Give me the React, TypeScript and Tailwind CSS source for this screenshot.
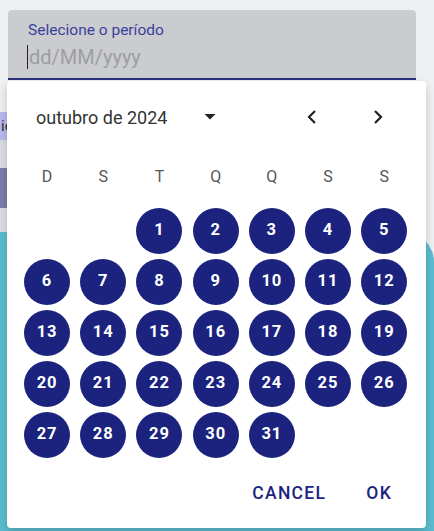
import React from "react";

const days: (number | null)[] = [null, null, ...Array.from({ length: 31 }, (_, i) => i + 1)];
const weekdays = ["D", "S", "T", "Q", "Q", "S", "S"];

export default function App() {
  return (
    <div className="relative w-[434px] h-[531px] overflow-hidden bg-[#eff0f2]" style={{ fontFamily: "Roboto, 'Liberation Sans', sans-serif" }}>
      {/* background page content */}
      <div className="absolute left-0 top-[112px] w-[20px] h-[28px] bg-[#b9b9ef] text-[15px] leading-[28px] text-[#333] pl-[1px]">ie</div>
      <div className="absolute left-0 top-[140px] w-[20px] h-[28px] bg-[#dcdde2]" />
      <div className="absolute left-0 top-[168px] w-[20px] h-[40px] bg-[#7c7ca8]" />
      <div className="absolute left-0 top-[208px] w-[20px] h-[26px] bg-[#dcdde2]" />
      <div className="absolute left-0 top-[232px] w-[434px] h-[300px] bg-[#5bbccf] rounded-tr-[30px]" />

      {/* input */}
      <div className="absolute left-[8px] top-[10px] w-[408px] h-[70px] bg-[#cbccd0] rounded-t-[4px] border-b-2 border-[#2a2f7e]">
        <div className="pl-[20px] pt-[10px] text-[15.5px] leading-[20px] text-[#3b3f9c]">Selecione o período</div>
        <div className="pl-[19px] pt-[4px] flex items-center">
          <span className="w-px h-[24px] bg-[#222] mr-[1px]" />
          <span className="text-[20px] leading-[26px] text-[#9d9ea2]">dd/MM/yyyy</span>
        </div>
      </div>

      {/* popup */}
      <div className="absolute left-[7px] top-[81px] w-[419px] h-[447px] bg-white rounded-[4px] shadow-[0_4px_10px_rgba(0,0,0,0.18)]">
        <div className="flex items-center h-[72px] pl-[29px]">
          <span className="text-[18px] text-[#333] w-[166px]">outubro de 2024</span>
          <svg width="14" height="8" viewBox="0 0 14 8" className="ml-[1px]">
            <path d="M1.5 1 L7 6.5 L12.5 1 Z" fill="#222" />
          </svg>
          <svg width="12" height="16" viewBox="0 0 12 16" className="ml-[89px]">
            <path d="M9 2 L3 8 L9 14" stroke="#222" strokeWidth="2.2" fill="none" />
          </svg>
          <svg width="12" height="16" viewBox="0 0 12 16" className="ml-[54px]">
            <path d="M3 2 L9 8 L3 14" stroke="#222" strokeWidth="2.2" fill="none" />
          </svg>
        </div>
        <div className="pl-[12px]">
          <div className="grid grid-cols-[repeat(7,56.2px)] h-[48px] items-center">
            {weekdays.map((d, i) => (
              <div key={i} className="text-center text-[16px] text-[#555]">{d}</div>
            ))}
          </div>
          <div className="grid grid-cols-[repeat(7,56.2px)] auto-rows-[51px] mt-[4px]">
            {days.map((d, i) => (
              <div key={i} className="flex items-center justify-center">
                {d !== null && (
                  <div className="w-[46px] h-[46px] rounded-full bg-[#1b237e] text-white font-bold text-[16.5px] flex items-center justify-center tracking-[1px]">
                    {d}
                  </div>
                )}
              </div>
            ))}
          </div>
        </div>
        <div className="flex justify-end items-center gap-[40px] pr-[34px] mt-[20px]">
          <span className="text-[17.5px] font-medium tracking-[1.3px] text-[#1b237e]">CANCEL</span>
          <span className="text-[17.5px] font-medium tracking-[1.3px] text-[#1b237e]">OK</span>
        </div>
      </div>
    </div>
  );
}
